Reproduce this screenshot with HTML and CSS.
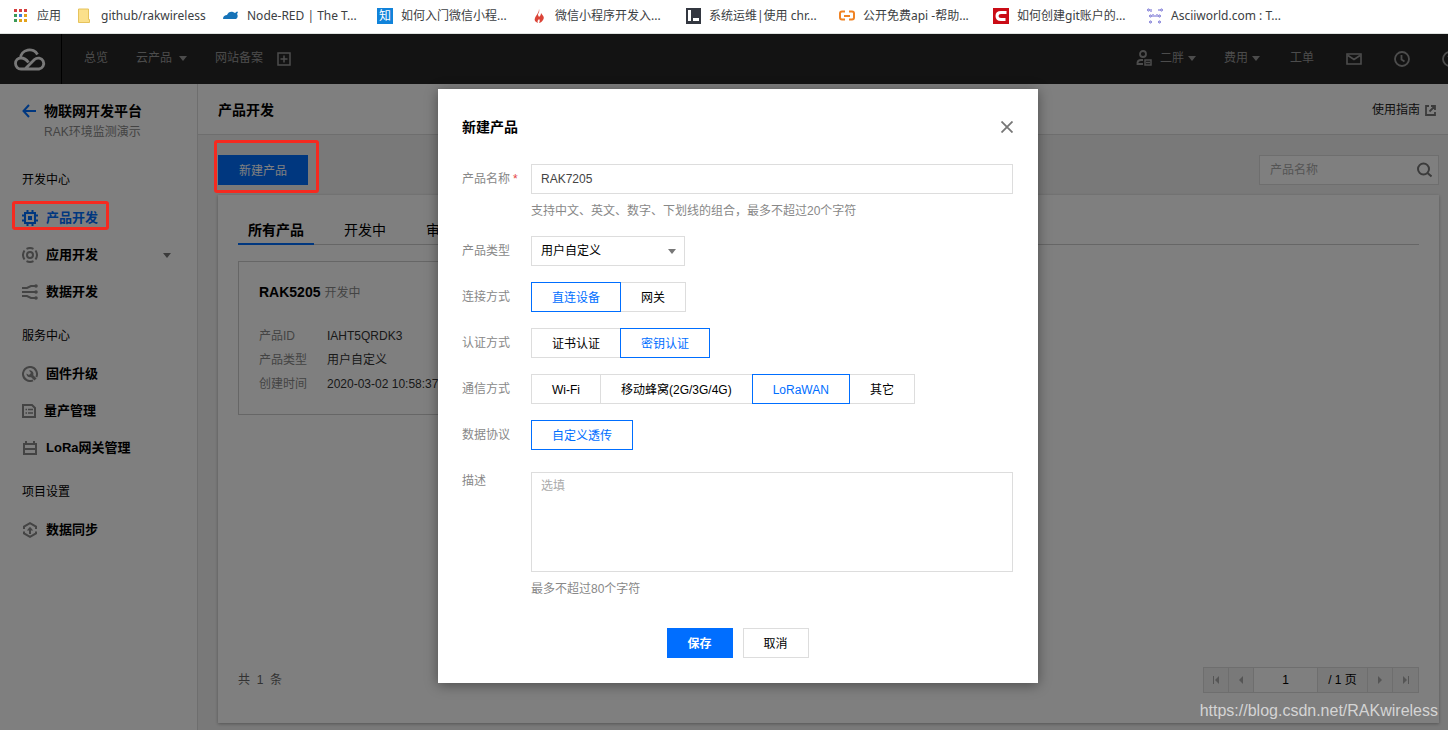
FILE: index.html
```html
<!DOCTYPE html>
<html lang="zh-CN">
<head>
<meta charset="utf-8">
<title>产品开发</title>
<link rel="stylesheet" href="styles.css">
</head>
<body>
<nav class="bookmarks" aria-label="书签">
  <a class="bm bm-apps" href="#"><svg width="16" height="16" viewBox="0 0 16 16"><g fill="#d63f3f"><path d="M1 1h3v3H1zM6 1h3v3H6zM11 1h3v3h-3z"/></g><path fill="#3a9a57" d="M1 6h3v3H1z"/><path fill="#3b79e0" d="M6 6h3v3H6z"/><path fill="#e3a21a" d="M11 6h3v3h-3zM6 11h3v3H6zM11 11h3v3h-3z"/><path fill="#3a9a57" d="M1 11h3v3H1z"/></svg>应用</a>
  <a class="bm bm-folder" href="#"><svg width="16" height="16" viewBox="0 0 16 16"><path d="M1.500 1h10v10.500h1v3h-11z" fill="#fbe08b" stroke="#e6c35c"/></svg>github/rakwireless</a>
  <a class="bm" href="#"><svg width="16" height="16" viewBox="0 0 16 16"><path fill="#1673b8" d="M0 11c0-3 2-4 4-4 1-3 4-4 6-3l2 1 2-1.500 1 .5-1 2c1 1 1 4-1 5z"/></svg>Node-RED | The T...</a>
  <a class="bm" href="#"><span class="zhi">知</span>如何入门微信小程...</a>
  <a class="bm" href="#"><svg width="16" height="16" viewBox="0 0 16 16"><path fill="#db4437" d="M8 1c1 3-1 4-1 6l1 2c1-1 2-2 2-4 2 3 4 4 2 7-1 2-3 3-4 3 1-2 1-3 0-4-1 2-2 1-1 4-3-1-4-3-3-5 1-3 4-5 4-9z"/></svg>微信小程序开发入...</a>
  <a class="bm" href="#"><svg width="16" height="16" viewBox="0 0 16 16"><path fill="#333740" d="M1 0h15v16H1z"/><path fill="#fff" d="M3 2h3v11H3zM8 10h6v3H8z"/></svg>系统运维|使用 chr...</a>
  <a class="bm" href="#"><svg width="16" height="16" viewBox="0 0 16 16"><path d="M6 3.500H3Q1 3.500 1 5.500v4q0 2 2 2h3M10 3.500h3q2 0 2 2v4q0 2-2 2h-3" fill="none" stroke="#f08324" stroke-width="2"/><path d="M5 7h6v2H5z" fill="#f08324"/></svg>公开免费api -帮助...</a>
  <a class="bm" href="#"><svg width="16" height="16" viewBox="0 0 16 16"><path fill="#ca0c16" d="M0 0h16v16H0z"/><path d="M13.500 4.500H8Q4 4.500 4 8t4 3.500h4.500" fill="none" stroke="#fff" stroke-width="3"/></svg>如何创建git账户的...</a>
  <a class="bm" href="#"><svg width="16" height="16" viewBox="0 0 16 16"><g fill="none" stroke="#6a66d0" stroke-width="1"><circle cx="1.500" cy="2" r="1"/><path d="M4 1v3M12 1v2"/><circle cx="14.500" cy="2" r="1"/><circle cx="3.500" cy="8" r="1"/><path d="M6 6v3M8 7v2M10 6v3"/><circle cx="12.500" cy="8" r="1"/><circle cx="3.500" cy="14" r="1"/><circle cx="12.500" cy="14" r="1"/></g></svg>Asciiworld.com : T...</a>
</nav>

<div class="app">
  <header class="topbar">
    <a class="logo" href="#" aria-label="控制台"><svg width="34" height="26" viewBox="0 0 34 26" fill="none" stroke="#f0f0f0" stroke-width="2.800"><path d="M7.500 12A9 8.600 0 0 1 24.500 8.500M15.500 16.500C13 13 10.500 12 8 12A5.500 5.500 0 0 0 8 23H26A5.500 5.500 0 1 0 21.500 13.500L12 23"/></svg></a>
    <nav class="topnav">
      <a href="#">总览</a>
      <a href="#" class="drop">云产品<i class="caret"></i></a>
      <a href="#">网站备案</a>
      <a href="#" class="plus" aria-label="添加"><svg width="14" height="14" viewBox="0 0 14 14" fill="none" stroke="currentColor" stroke-width="1.500"><path d="M1 1h12v12H1zM7 3.500v7M3.500 7h7"/></svg></a>
    </nav>
    <nav class="account">
      <a href="#" class="user"><svg width="16" height="16" viewBox="0 0 16 16" fill="none" stroke="currentColor" stroke-width="1.800"><circle cx="7" cy="4" r="3"/><path d="M7 14H1.500v-1.500Q2 10 5 10h2"/><path d="M9 10h6v5H9zM10 12.500h4" stroke-width="1.500"/></svg>二胖<i class="caret"></i></a>
      <a href="#" class="bill">费用<i class="caret"></i></a>
      <a href="#">工单</a>
      <a href="#" class="glyph" aria-label="消息"><svg width="16" height="12" viewBox="0 0 16 12" fill="none" stroke="currentColor" stroke-width="1.600"><path d="M1 1h14v10H1zM2 2.500l6 4 6-4"/></svg></a>
      <a href="#" class="glyph" aria-label="历史"><svg width="16" height="16" viewBox="0 0 16 16" fill="none" stroke="currentColor" stroke-width="1.800"><circle cx="8" cy="8" r="7"/><path d="M7.500 4v4.500l3 2"/></svg></a>
      <a href="#" class="glyph" aria-label="帮助"><svg width="16" height="16" viewBox="0 0 16 16" fill="none" stroke="currentColor" stroke-width="1.800"><circle cx="8" cy="8" r="7"/><path d="M6 6q2-3 4 0 0 1-2 3v1"/></svg></a>
    </nav>
  </header>

  <div class="content">
    <aside class="sidebar">
      <div class="side-head">
        <a href="#" class="back" aria-label="返回"><svg width="14" height="14" viewBox="0 0 14 14" fill="none" stroke="currentColor" stroke-width="2"><path d="M7 1L1.500 7 7 13M1.500 7H14"/></svg></a>
        <div><h1>物联网开发平台</h1><p>RAK环境监测演示</p></div>
      </div>
      <h2>开发中心</h2>
      <a href="#" class="item active"><svg width="16" height="16" viewBox="0 0 16 16" fill="none" stroke="currentColor" stroke-width="2"><path d="M3 3h10v10H3zM5.500 0v3M10.500 0v3M5.500 13v3M10.500 13v3M0 5.500h3M0 10.500h3M13 5.500h3M13 10.500h3"/><path fill="currentColor" stroke="none" d="M6 6h4v4H6z"/></svg>产品开发<span class="mark mark-item"></span></a>
      <a href="#" class="item"><svg width="16" height="16" viewBox="0 0 16 16" fill="none" stroke="currentColor" stroke-width="2"><circle cx="8" cy="8" r="3"/><path d="M4.500 1.800Q8 .2 11.500 1.800M4.500 14.200q3.500 1.600 7 0M2.500 3.500q-3 4.500 0 9M13.500 3.500q3 4.500 0 9"/></svg>应用开发<i class="caret"></i></a>
      <a href="#" class="item"><svg width="16" height="16" viewBox="0 0 16 16" fill="none" stroke="currentColor" stroke-width="2"><path d="M0 4h5l4-2h5M0 8h14M0 12h5l4 2h5"/><g fill="currentColor" stroke="none"><circle cx="14" cy="2" r="1.800"/><circle cx="14" cy="8" r="1.800"/><circle cx="14" cy="14" r="1.800"/></g></svg>数据开发</a>
      <h2>服务中心</h2>
      <a href="#" class="item"><svg width="16" height="16" viewBox="0 0 16 16" fill="none" stroke="currentColor" stroke-width="2"><path d="M11 14.300A7 7 0 1 1 14.300 11"/><path d="M8.500 8.500l5 5" stroke-width="3"/><path d="M7 4.500a3.500 3.500 0 1 1-2.500 3L7 9l2-2z" fill="currentColor" stroke="none"/></svg>固件升级</a>
      <a href="#" class="item"><svg width="14" height="14" viewBox="0 0 14 14" fill="none" stroke="currentColor" stroke-width="2"><path d="M1 1h9l3 3v9H1z"/><path d="M3.500 5.500h1.500M6 5.500h5M3.500 9h1.500M6 9h5" stroke-width="1.500"/></svg>量产管理</a>
      <a href="#" class="item"><svg width="16" height="16" viewBox="0 0 16 16" fill="none" stroke="currentColor" stroke-width="2"><path d="M2 4h12v10H2zM2 9h12M4 1v3M12 1v3"/></svg>LoRa网关管理</a>
      <h2>项目设置</h2>
      <a href="#" class="item"><svg width="16" height="16" viewBox="0 0 16 16" fill="none" stroke="currentColor" stroke-width="2"><path d="M2 7V4.500L8 1.200l6 3.300V7M2 9.500v2l6 3.300 6-3.300v-2"/><path d="M8 12V7"/><path d="M4.800 8.500L8 4.800l3.200 3.700z" fill="currentColor" stroke="none"/></svg>数据同步</a>
    </aside>

    <main class="main">
      <div class="page-head"><h1>产品开发</h1><a href="#">使用指南<svg width="11" height="11" viewBox="0 0 11 11" fill="none" stroke="#777" stroke-width="1.800"><path d="M4 1H1v9h9V7M6 1h4v4M10 1L4.500 6.500"/></svg></a></div>
      <div class="page-body">
        <div class="tools">
          <div class="create-wrap"><button type="button" class="create">新建产品</button><span class="mark mark-create"></span></div>
          <label class="search"><input type="text" placeholder="产品名称" aria-label="产品名称"><svg width="16" height="16" viewBox="0 0 16 16" fill="none" stroke="#777" stroke-width="2"><circle cx="7.500" cy="7" r="5.500"/><path d="M11.500 11l4 3.500"/></svg></label>
        </div>
        <section class="panel">
          <div class="tabs"><a href="#" class="on">所有产品</a><a href="#">开发中</a><a href="#">审核中</a></div>
          <article class="product">
            <h3>RAK5205 <small>开发中</small></h3>
            <dl><dt>产品ID</dt><dd>IAHT5QRDK3</dd><dt>产品类型</dt><dd>用户自定义</dd><dt>创建时间</dt><dd>2020-03-02 10:58:37</dd></dl>
          </article>
          <footer class="pager">
            <span class="total">共&nbsp; 1 &nbsp;条</span>
            <div class="pages">
              <button type="button" aria-label="首页"><svg width="8" height="8" viewBox="0 0 8 8"><path d="M1 0h1v8H1zM7 0v8L3 4z" fill="#aaa"/></svg></button>
              <button type="button" aria-label="上一页"><svg width="8" height="8" viewBox="0 0 8 8"><path d="M6 0v8L2 4z" fill="#aaa"/></svg></button>
              <input type="text" value="1" aria-label="页码">
              <span>/ 1 页</span>
              <button type="button" aria-label="下一页"><svg width="8" height="8" viewBox="0 0 8 8"><path d="M2 0v8l4-4z" fill="#aaa"/></svg></button>
              <button type="button" aria-label="末页"><svg width="8" height="8" viewBox="0 0 8 8"><path d="M6 0h1v8H6zM1 0v8l4-4z" fill="#aaa"/></svg></button>
            </div>
          </footer>
        </section>
      </div>
    </main>
  </div>

  <div class="overlay">
    <form class="dialog" role="dialog" aria-labelledby="dialog-title">
      <div class="dialog-head"><h2 id="dialog-title">新建产品</h2><button type="button" class="close" aria-label="关闭"><svg width="12" height="12" viewBox="0 0 12 12" stroke="#777" stroke-width="1.800"><path d="M.5.5l11 11M11.500.5l-11 11"/></svg></button></div>
      <div class="row"><label class="name" for="pname">产品名称<b>*</b></label><div><input id="pname" class="text" type="text" value="RAK7205"><p class="hint">支持中文、英文、数字、下划线的组合，最多不超过20个字符</p></div></div>
      <div class="row"><label class="name" for="ptype">产品类型</label><div class="select"><select id="ptype"><option>用户自定义</option></select><i class="caret"></i></div></div>
      <div class="row" role="radiogroup" aria-labelledby="l1"><span class="name" id="l1">连接方式</span><div class="segs"><label><input type="radio" name="conn" checked><span>直连设备</span></label><label><input type="radio" name="conn"><span>网关</span></label></div></div>
      <div class="row" role="radiogroup" aria-labelledby="l2"><span class="name" id="l2">认证方式</span><div class="segs"><label><input type="radio" name="auth"><span>证书认证</span></label><label><input type="radio" name="auth" checked><span>密钥认证</span></label></div></div>
      <div class="row" role="radiogroup" aria-labelledby="l3"><span class="name" id="l3">通信方式</span><div class="segs"><label><input type="radio" name="net"><span>Wi-Fi</span></label><label><input type="radio" name="net"><span>移动蜂窝(2G/3G/4G)</span></label><label><input type="radio" name="net" checked><span>LoRaWAN</span></label><label><input type="radio" name="net"><span>其它</span></label></div></div>
      <div class="row" role="radiogroup" aria-labelledby="l4"><span class="name" id="l4">数据协议</span><div class="segs"><label><input type="radio" name="proto" checked><span>自定义透传</span></label></div></div>
      <div class="row"><label class="name" for="desc">描述</label><div class="desc"><textarea id="desc" placeholder="选填"></textarea><p class="hint">最多不超过80个字符</p></div></div>
      <div class="actions"><button type="submit" class="save">保存</button><button type="button">取消</button></div>
    </form>
  </div>
  <p class="watermark">https://blog.csdn.net/RAKwireless</p>
</div>
</body>
</html>
```

FILE: styles.css
```css
* { box-sizing: border-box; }
body, h1, h2, h3, p, dl, dd { margin: 0; }
body {
  display: flex;
  flex-direction: column;
  min-height: 100vh;
  overflow-x: hidden;
  font: 12px/18px "Liberation Sans", "Noto Sans CJK SC", sans-serif;
  color: #000;
}
a { color: inherit; text-decoration: none; }
button, input, select, textarea { font: inherit; color: inherit; border-radius: 0; }
svg { display: block; flex: none; }
.caret {
  flex: none;
  border: 4px solid transparent;
  border-top: 5px solid #777;
  border-bottom: 0;
}

/* browser bookmarks */
.bookmarks {
  display: flex;
  height: 34px;
  padding: 0 0 2px 13px;
  background: #fff;
  border-bottom: 1px solid #dfe3e0;
  font-family: "Noto Sans", "Noto Sans CJK SC", sans-serif;
  color: #3c4043;
}
.bm { display: flex; align-items: center; gap: 8px; flex: none; width: 154px; white-space: nowrap; }
.bm-apps { width: 64px; }
.bm-folder { width: 146px; }
.zhi { width: 16px; height: 16px; background: #1183da; color: #fff; line-height: 16px; text-align: center; }

/* console */
.app { position: relative; display: flex; flex: 1; flex-direction: column; overflow: hidden; }
.topbar { display: flex; height: 50px; background: #262626; color: #999; }
.topbar a { display: flex; align-items: center; }
.topbar .logo { width: 62px; padding-left: 13px; border-right: 1px solid #000; }
.topnav, .account { display: flex; padding-bottom: 2px; }
.topnav { gap: 28px; padding-left: 22px; }
.drop { gap: 7px; }
.topnav .plus { margin-left: -14px; padding-top: 2px; }
.account { gap: 32px; margin: 0 -10px 0 auto; }
.account a { gap: 4px; }
.account .user svg { margin-right: 4px; }
.account .user { margin-right: -4px; }
.account .bill { margin-right: -2px; }
.account .glyph { padding-top: 2px; }
.topbar .caret { border-top-color: #999; }

.content { display: flex; flex: 1; }
.sidebar { flex: none; width: 198px; padding-left: 22px; background: #fff; border-right: 1px solid #ddd; }
.side-head { display: flex; gap: 8px; height: 78px; padding-top: 16px; }
.back { padding-top: 4px; color: #006eff; }
.side-head h1 { font-size: 14px; line-height: 22px; }
.side-head p { color: #888; line-height: 20px; }
.sidebar h2 { margin-top: 8px; font-size: 12px; line-height: 37px; font-weight: normal; }
.side-head + h2 { margin-top: 0; }
.item { position: relative; display: flex; align-items: center; gap: 8px; height: 37px; padding: 1px 26px 0 0; font-size: 13px; font-weight: bold; }
.item svg { color: #888; }
.item .caret { margin-left: auto; }
.active, .active svg { color: #006eff; }

/* highlight frames above the backdrop */
.mark { position: absolute; z-index: 20; border: 3px solid #f52a20; border-radius: 3px; }
.mark-item { top: 2px; left: -10px; width: 97px; height: 29px; }
.mark-create { top: -15px; left: -4px; width: 105px; height: 53px; }

.main { display: flex; flex: 1; flex-direction: column; background: #f2f2f2; }
.page-head { display: flex; align-items: center; justify-content: space-between; height: 51px; padding: 2px 12px 0 20px; background: #fff; border-bottom: 1px solid #ddd; }
.page-head h1 { font-size: 14px; }
.page-head a { display: flex; align-items: center; gap: 5px; color: #222; }
.page-body { display: flex; flex: 1; flex-direction: column; gap: 10px; padding: 20px 9px 7px 20px; }
.tools { display: flex; justify-content: space-between; }
.create-wrap { position: relative; }
.create { display: block; width: 90px; height: 30px; padding: 2px 0 0; border: 0; background: #006eff; color: #fff; }
.search { display: flex; align-items: center; width: 180px; height: 30px; padding: 0 6px 0 10px; background: #fff; border: 1px solid #ddd; }
.search input { flex: 1; min-width: 0; padding: 0; border: 0; background: none; }
::placeholder { color: #aaa; opacity: 1; }
.panel { display: flex; flex: 1; flex-direction: column; padding: 20px 20px 30px; background: #fff; box-shadow: 0 1px 3px rgba(0, 0, 0, .3); }
.tabs { display: flex; gap: 20px; height: 30px; border-bottom: 1px solid #ccc; font-size: 14px; line-height: 30px; }
.tabs a { height: 30px; padding: 0 10px; }
.tabs .on { border-bottom: 2px solid #006eff; font-weight: bold; }
.product { width: 380px; margin-top: 16px; padding: 20px 20px 18px; border: 1px solid #ccc; }
.product h3 { font-size: 14px; line-height: 20px; }
.product small { font-size: 12px; font-weight: normal; color: #888; }
.product dl { display: grid; grid-template-columns: 68px 1fr; margin-top: 21px; line-height: 24px; }
.product dt { color: #888; }
.product dd { color: #333; }
.pager { display: flex; align-items: center; justify-content: space-between; margin-top: auto; color: #666; }
.pages { display: flex; height: 26px; border: 1px solid #ddd; background: #f2f2f2; color: #000; }
.pages > * { display: grid; place-items: center; border: 0; border-right: 1px solid #ddd; background: none; }
.pages > :last-child { border-right: 0; }
.pages button { width: 25px; padding: 0; }
.pages input { width: 64px; padding: 0; background: #fff; text-align: center; }
.pages span { width: 50px; }

/* dialog */
.overlay { position: absolute; inset: 0; z-index: 10; display: flex; align-items: flex-start; justify-content: center; padding: 55px 0 0 28px; background: rgba(0, 0, 0, .5); }
.dialog { display: flex; flex-direction: column; gap: 16px; width: 600px; padding: 28px 25px 25px 24px; background: #fff; box-shadow: 0 2px 12px rgba(0, 0, 0, .4); }
.dialog-head { display: flex; align-items: center; justify-content: space-between; height: 20px; margin-bottom: 11px; }
.dialog-head h2 { font-size: 14px; }
.close { padding: 0; border: 0; background: none; }
.row { display: grid; grid-template-columns: 69px 1fr; }
.name { color: #888; line-height: 30px; }
.name b { margin-left: 3px; color: #e54545; font-weight: normal; }
.text, textarea, select { display: block; width: 100%; height: 30px; padding: 0 9px; border: 1px solid #ddd; background: #fff; }
.text { color: #444; }
.hint { margin-top: 8px; color: #888; }
.select { display: grid; align-items: center; width: 154px; }
.select > * { grid-area: 1 / 1; }
.select select { appearance: none; }
.select .caret { justify-self: end; margin-right: 9px; pointer-events: none; }
.segs { display: flex; }
.segs label { position: relative; display: block; }
.segs label + label { margin-left: -1px; }
.segs input { position: absolute; opacity: 0; }
.segs span { display: block; height: 30px; padding: 0 20px; border: 1px solid #ddd; line-height: 30px; }
.segs label:has(:checked) { z-index: 1; }
.segs :checked + span { border-color: #006eff; color: #006eff; }
.desc { margin-top: 6px; }
textarea { height: 100px; padding: 4px 9px; resize: none; }
.actions { display: flex; justify-content: center; gap: 10px; margin-top: 14px; }
.actions button { width: 66px; height: 30px; padding: 2px 0 0; border: 1px solid #ddd; background: #fff; }
.actions .save { border-color: #006eff; background: #006eff; color: #fff; font-weight: bold; }

.watermark { position: absolute; right: 10px; bottom: 9px; z-index: 20; color: #d4d4d4; font-size: 16px; line-height: 20px; }
```
